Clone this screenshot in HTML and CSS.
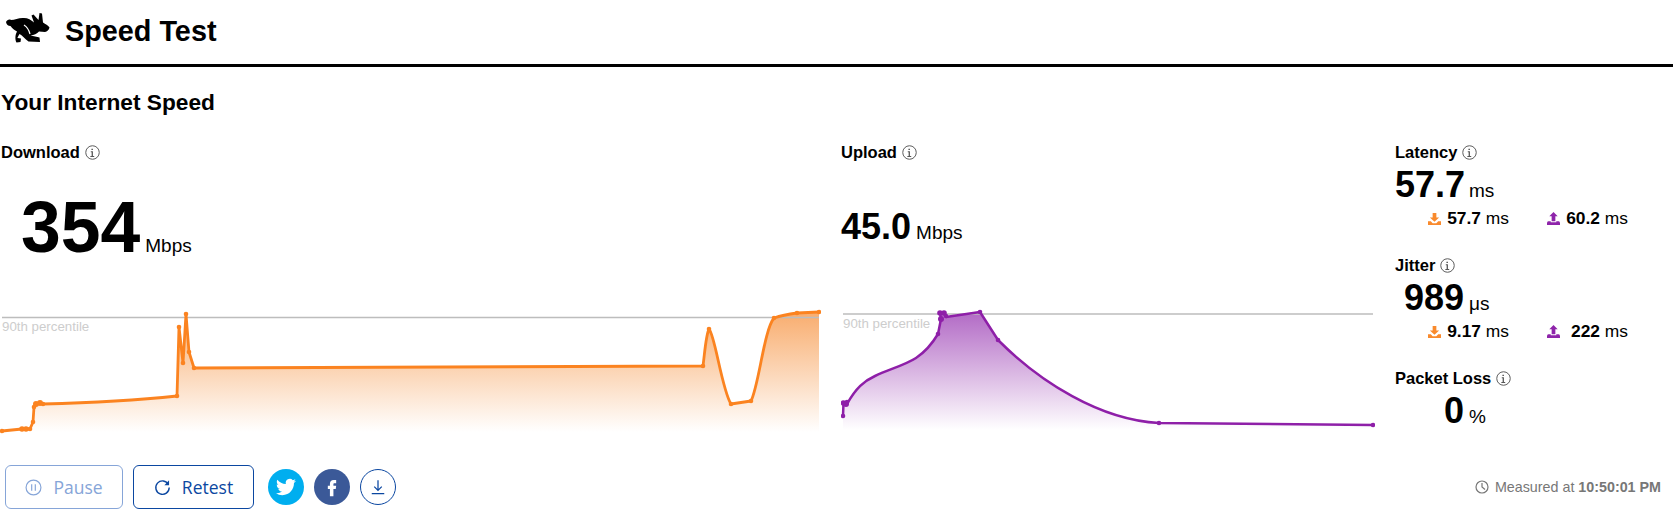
FILE: index.html
```html
<!DOCTYPE html>
<html lang="en">
<head>
<meta charset="utf-8">
<title>Speed Test</title>
<link rel="stylesheet" href="styles.css">
</head>
<body>
<svg class="defs" width="0" height="0" aria-hidden="true">
  <symbol id="info" viewBox="0 0 14 14"><circle cx="7" cy="7" r="6.300" fill="none" stroke="currentColor" stroke-width=".9"/><path d="M6 3.400h1.400v1.200H6zM5.400 5.900h2v4.400h1.200v.8H5v-.8h1.200V6.700h-.8z" fill="currentColor"/></symbol>
  <symbol id="down" viewBox="0 0 14 14"><path d="M5 1h4v5h3L7 10.500 2 6h3zM0 10h3l2 2h4l2-2h3v4H0z" fill="currentColor"/></symbol>
  <symbol id="up" viewBox="0 0 14 14"><path d="M7 0l4.500 4.500H9v5.500H5V4.500H2.500zM1.500 10H4v1h6v-1h2.500q1.500 0 1.500 2v2H0v-2q0-2 1.500-2z" fill="currentColor"/></symbol>
</svg>

<header class="topbar">
  <svg class="logo" viewBox="0 10 50 46" aria-hidden="true">
    <path d="M6 22C7 20 9 19 11 20 15 20 19 17.500 24 18 28 18 31 20 34 22.500L31.500 15.500 33.500 14.500 38.500 20 39.500 13 42 13.500 43 22.500C45.500 24 48 25.500 49.500 27.500 49 30 47 31.500 45 32L39 31.500C37 34 34 35 30.500 35.500 33.500 36.500 37 36.500 39.500 37.500L40 42 28.500 41.500C25 39 22 35 19.500 34 18.500 36 17.500 37 17.500 38L21 38.500 20.500 42 16.500 42.500C15 40 15 35 17 31.500 14 30 12 28 10.500 26 8 26 6.500 24.500 6 22Z" fill="#000"/>
    <path d="M24 25c3 2 5 5 6 9" fill="none" stroke="#fff" stroke-width="1.200"/>
  </svg>
  <h1 class="title">Speed Test</h1>
</header>

<h2 class="heading">Your Internet Speed</h2>

<main class="metrics">
  <section class="col col-down">
    <div class="label">Download <svg class="info"><use href="#info"/></svg></div>
    <div class="value-area value-area-down">
      <span class="big">354</span><span class="unit">Mbps</span>
    </div>
    <svg class="chart chart-down" viewBox="0 305 821 130" aria-hidden="true">
      <defs>
        <linearGradient id="gOrange" gradientUnits="userSpaceOnUse" x1="0" y1="312" x2="0" y2="432">
          <stop offset="0" stop-color="#f5862a" stop-opacity=".68"/>
          <stop offset="1" stop-color="#f5862a" stop-opacity="0"/>
        </linearGradient>
      </defs>
      <path fill="url(#gOrange)" d="M2 432V431L22 429H30L33 422 34 407 36 404 40 403 43 404Q120 402 177 396L179 327 183 363 186 314 189 352 194 368 703 366C705 350 706 335 709 329 715 335 722 390 731 404L751 401C759 385 764 330 774 318 780 316 790 314 797 313L819 312V432Z"/>
      <line class="p90" x1="2" y1="317.500" x2="819" y2="317.500"/>
      <text class="p90-text" x="2" y="331">90th percentile</text>
      <path class="line-o" d="M2 431L22 429H30L33 422 34 407 36 404 40 403 43 404Q120 402 177 396L179 327 183 363 186 314 189 352 194 368 703 366C705 350 706 335 709 329 715 335 722 390 731 404L751 401C759 385 764 330 774 318 780 316 790 314 797 313L819 312"/>
      <g class="dots-o">
        <circle cx="2" cy="431" r="2.300"/><circle cx="22" cy="429" r="2.800"/><circle cx="26" cy="429" r="2.800"/><circle cx="30" cy="429" r="2.300"/><circle cx="33" cy="422" r="2.300"/><circle cx="34" cy="407" r="2.300"/><circle cx="36" cy="404" r="3"/><circle cx="40" cy="403" r="3"/><circle cx="43" cy="404" r="2.300"/><circle cx="177" cy="396" r="2.300"/><circle cx="179" cy="327" r="2.300"/><circle cx="183" cy="363" r="2.300"/><circle cx="186" cy="314" r="2.300"/><circle cx="189" cy="352" r="2.300"/><circle cx="194" cy="368" r="2.300"/><circle cx="703" cy="366" r="2.300"/><circle cx="709" cy="329" r="2.300"/><circle cx="731" cy="404" r="2.300"/><circle cx="751" cy="401" r="2.300"/><circle cx="774" cy="318" r="2.300"/><circle cx="797" cy="313" r="2.300"/><circle cx="819" cy="312" r="2.300"/>
      </g>
    </svg>
  </section>

  <section class="col col-up">
    <div class="label">Upload <svg class="info"><use href="#info"/></svg></div>
    <div class="value-area">
      <span class="mid">45.0</span><span class="unit">Mbps</span>
    </div>
    <svg class="chart chart-up" viewBox="841 305 534 130" aria-hidden="true">
      <defs>
        <linearGradient id="gPurple" gradientUnits="userSpaceOnUse" x1="0" y1="312" x2="0" y2="430">
          <stop offset="0" stop-color="#8e24aa" stop-opacity=".68"/>
          <stop offset="1" stop-color="#8e24aa" stop-opacity="0"/>
        </linearGradient>
      </defs>
      <path fill="url(#gPurple)" d="M843 430V416L843.500 403 847 404C856 388 864 381 875 376 890 369 905 365 916 358 925 352 932 344 938 334L941 319 940 313 944 313 946 317 980 312 998 340C1040 382 1100 420 1159 423L1373 425V430Z"/>
      <line class="p90" x1="843" y1="314" x2="1373" y2="314"/>
      <text class="p90-text" x="843" y="327.500">90th percentile</text>
      <path class="line-p" d="M843 416L843.500 403 847 404C856 388 864 381 875 376 890 369 905 365 916 358 925 352 932 344 938 334L941 319 940 313 944 313 946 317 980 312 998 340C1040 382 1100 420 1159 423L1373 425"/>
      <g class="dots-p">
        <circle cx="843" cy="416" r="2.300"/><circle cx="843.500" cy="403" r="2.800"/><circle cx="846" cy="404" r="3"/><circle cx="847" cy="402" r="2.300"/><circle cx="938" cy="334" r="2.300"/><circle cx="941" cy="319" r="3"/><circle cx="940" cy="313" r="2.800"/><circle cx="944" cy="313" r="2.800"/><circle cx="946" cy="316" r="2.300"/><circle cx="980" cy="312" r="2.300"/><circle cx="998" cy="340" r="2.300"/><circle cx="1159" cy="423" r="2.300"/><circle cx="1373" cy="425" r="2.300"/>
      </g>
    </svg>
  </section>

  <section class="col col-stats">
    <div class="stat">
      <div class="label">Latency <svg class="info"><use href="#info"/></svg></div>
      <div class="stat-value"><span class="mid stat-num">57.7</span><span class="unit">ms</span></div>
      <div class="sub">
        <div class="sub-cell"><svg class="dir dir-down"><use href="#down"/></svg><span><b>57.7</b> ms</span></div>
        <div class="sub-cell"><svg class="dir dir-up"><use href="#up"/></svg><span><b>60.2</b> ms</span></div>
      </div>
    </div>
    <div class="stat">
      <div class="label">Jitter <svg class="info"><use href="#info"/></svg></div>
      <div class="stat-value"><span class="mid stat-num">989</span><span class="unit">μs</span></div>
      <div class="sub">
        <div class="sub-cell"><svg class="dir dir-down"><use href="#down"/></svg><span><b>9.17</b> ms</span></div>
        <div class="sub-cell"><svg class="dir dir-up"><use href="#up"/></svg><span><b>222</b> ms</span></div>
      </div>
    </div>
    <div class="stat">
      <div class="label">Packet Loss <svg class="info"><use href="#info"/></svg></div>
      <div class="stat-value"><span class="mid stat-num">0</span><span class="unit">%</span></div>
    </div>
  </section>
</main>

<footer class="actions">
  <button class="btn btn-off" type="button">
    <svg class="btn-icon" viewBox="0 0 16 16"><circle cx="8" cy="8" r="7" fill="none" stroke="currentColor" stroke-width="1.100"/><path d="M6.300 5v6M9.700 5v6" stroke="currentColor" stroke-width="1.100"/></svg>
    Pause
  </button>
  <button class="btn btn-on" type="button">
    <svg class="btn-icon" viewBox="0 0 16 16"><path d="M13.600 5.200A6.300 6.300 0 1 0 14.300 8" fill="none" stroke="currentColor" stroke-width="1.300"/><path d="M14.200 1.200v4.600H9.800z" fill="currentColor"/></svg>
    Retest
  </button>
  <span class="round round-tw"><svg viewBox="0 0 24 24"><path fill="#fff" d="M23.953 4.570a10 10 0 01-2.825.775 4.958 4.958 0 002.163-2.723c-.951.555-2.005.959-3.127 1.184a4.920 4.920 0 00-8.384 4.482C7.690 8.095 4.067 6.130 1.640 3.162a4.822 4.822 0 00-.666 2.475c0 1.710.870 3.213 2.188 4.096a4.904 4.904 0 01-2.228-.616v.060a4.923 4.923 0 003.946 4.827 4.996 4.996 0 01-2.212.085 4.936 4.936 0 004.604 3.417 9.867 9.867 0 01-6.102 2.105c-.390 0-.779-.023-1.170-.067a13.995 13.995 0 007.557 2.209c9.053 0 13.998-7.496 13.998-13.985 0-.210 0-.420-.015-.630A9.935 9.935 0 0024 4.590z"/></svg></span>
  <span class="round round-fb"><svg viewBox="0 0 24 24"><path fill="#fff" d="M14.500 7.500H17V3.500h-3c-2.800 0-4.500 1.900-4.500 4.500v2.500H7v3.800h2.500V23h4.200v-8.700H16.500l.5-3.800h-3.300V8.500c0-.6.300-1 .8-1z"/></svg></span>
  <span class="round round-dl"><svg viewBox="0 0 24 24"><path d="M12 4v12M7.500 11.500L12 16l4.500-4.500M4.500 20h15" fill="none" stroke="currentColor" stroke-width="1.500"/></svg></span>
  <div class="measured">
    <svg class="clock" viewBox="0 0 14 14"><circle cx="7" cy="7" r="6" fill="none" stroke="currentColor" stroke-width="1.200"/><path d="M7 3v4l3 2.500" fill="none" stroke="currentColor" stroke-width="1.200"/></svg>
    <span>Measured at <b>10:50:01 PM</b></span>
  </div>
</footer>
</body>
</html>
```

FILE: styles.css
```css
* { box-sizing: border-box; }
html, body { margin: 0; padding: 0; }
body {
  width: 1673px;
  height: 526px;
  overflow: hidden;
  background: #fff;
  color: #000;
  font-family: "Liberation Sans", Arial, sans-serif;
}
.defs { position: absolute; }

.topbar {
  height: 67px;
  border-bottom: 3px solid #000;
  display: flex;
  align-items: center;
}
.logo { width: 50px; height: 46px; flex: none; margin-top: 2px; }
.title {
  margin: 0 0 2px 15px;
  font-size: 28.800px;
  line-height: 34px;
  font-weight: 700;
}
.heading {
  margin: 23px 0 0 1px;
  font-size: 22.700px;
  line-height: 24px;
  font-weight: 700;
}

.metrics {
  display: flex;
  margin-top: 29px;
  height: 292px;
}
.col-down { width: 841px; flex: none; }
.col-up { width: 554px; flex: none; }
.col-stats { flex: 1; }

.label {
  display: flex;
  align-items: center;
  gap: 5px;
  height: 20px;
  padding-bottom: 2px;
  font-size: 16.500px;
  font-weight: 700;
  line-height: 18px;
}
.col-down .label { padding-left: 1px; }
.info { width: 15px; height: 15px; color: #555; flex: none; }

.value-area {
  height: 142px;
  padding-bottom: 14px;
  display: flex;
  align-items: baseline;
  align-content: center;
  flex-wrap: wrap;
}
.value-area-down { padding-left: 21px; }
.big { font-size: 71.500px; line-height: 72px; font-weight: 700; }
.mid { font-size: 36px; line-height: 44px; font-weight: 700; }
.unit { font-size: 19px; margin-left: 5px; }

.chart { display: block; height: 130px; }
.chart-down { width: 821px; }
.chart-up { width: 534px; }
.p90 { stroke: #bdbdbd; stroke-width: 1.500; }
.p90-text { font-size: 13.300px; fill: #cdcdcd; font-family: "Liberation Sans", Arial, sans-serif; }
.line-o, .line-p { fill: none; stroke-linejoin: round; }
.line-o { stroke: #fb8320; stroke-width: 2.800; }
.line-p { stroke: #8e1fa8; stroke-width: 2.500; }
.dots-o { fill: #fb8320; }
.dots-p { fill: #8e1fa8; }

.stat { height: 113px; }
.stat-value { display: flex; align-items: baseline; height: 44px; }
.stat-num { width: 69px; text-align: right; }
.sub {
  display: flex;
  gap: 38px;
  margin-left: 33px;
  margin-top: 1px;
  font-size: 17.400px;
  line-height: 20px;
}
.sub-cell {
  width: 81px;
  display: flex;
  justify-content: space-between;
  align-items: center;
}
.dir { width: 13px; height: 13px; flex: none; }
.dir-down { color: #f98a2d; }
.dir-up { color: #8e24aa; }

.actions {
  display: flex;
  align-items: center;
  height: 44px;
  margin-top: 30px;
  padding: 0 12px 0 5px;
}
.btn {
  height: 44px;
  border-radius: 6px;
  border: 1px solid;
  background: #fff;
  font-family: "Open Sans", sans-serif;
  font-size: 17.500px;
  display: flex;
  align-items: center;
  justify-content: center;
  gap: 11px;
  padding: 0;
}
.btn-off { width: 118px; color: #86a5d8; border-color: #86a5d8; }
.btn-on { width: 121px; color: #0b47a1; border-color: #0b47a1; margin: 0 14px 0 10px; }
.btn-icon { width: 17px; height: 17px; flex: none; }
.round {
  width: 36px;
  height: 36px;
  border-radius: 50%;
  display: flex;
  align-items: center;
  justify-content: center;
  flex: none;
  margin-right: 10px;
}
.round svg { width: 20px; height: 20px; }
.round-tw { background: #00aeef; }
.round-fb { background: #3b5998; }
.round-dl { border: 1px solid #0b47a1; color: #0b47a1; }
.measured {
  margin-left: auto;
  display: flex;
  align-items: center;
  gap: 6px;
  font-size: 14.300px;
  color: #777;
}
.clock { width: 14px; height: 14px; flex: none; }
```
